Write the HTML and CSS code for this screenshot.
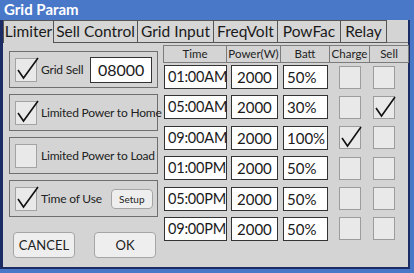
FILE: index.html
```html
<!DOCTYPE html>
<html lang="en">

<head>
  <meta charset="UTF-8">
  <title>Grid Param</title>
  <link rel="stylesheet" href="styles.css">
</head>

<body>
  <div class="screen">
    <div class="title">Grid Param</div>

    <div class="panel">
      <div class="tabs">
        <div class="tab active w-limiter">Limiter</div>
        <div class="tab w-sell">Sell Control</div>
        <div class="tab w-grid">Grid Input</div>
        <div class="tab w-freq">FreqVolt</div>
        <div class="tab w-pow">PowFac</div>
        <div class="tab w-relay">Relay</div>
        <div class="tab-fill"></div>
      </div>

      <div class="content">
        <div class="left">
          <div class="group">
            <div class="check on">
              <svg viewBox="0 0 22 24"><path d="M2 13 L7.5 21 L22 1"/></svg>
            </div>
            <span class="label">Grid Sell</span>
            <div class="field grid-sell">08000</div>
          </div>
          <div class="group">
            <div class="check on">
              <svg viewBox="0 0 22 24"><path d="M2 13 L7.5 21 L22 1"/></svg>
            </div>
            <span class="label">Limited Power to Home</span>
          </div>
          <div class="group">
            <div class="check"></div>
            <span class="label">Limited Power to Load</span>
          </div>
          <div class="group">
            <div class="check on">
              <svg viewBox="0 0 22 24"><path d="M2 13 L7.5 21 L22 1"/></svg>
            </div>
            <span class="label">Time of Use</span>
            <div class="btn setup">Setup</div>
          </div>
          <div class="actions">
            <div class="btn big">CANCEL</div>
            <div class="btn big">OK</div>
          </div>
        </div>

        <div class="table">
          <div class="th first">Time</div>
          <div class="th">Power(W)</div>
          <div class="th">Batt</div>
          <div class="th">Charge</div>
          <div class="th">Sell</div>
        </div>
        <div class="rows" id="rows"></div>
      </div>
    </div>
  </div>

  <script>
    // schedule rows for time of use
    const rows = [
      { time: '01:00AM', power: 2000, batt: '50%', charge: false, sell: false },
      { time: '05:00AM', power: 2000, batt: '30%', charge: false, sell: true },
      { time: '09:00AM', power: 2000, batt: '100%', charge: true, sell: false },
      { time: '01:00PM', power: 2000, batt: '50%', charge: false, sell: false },
      { time: '05:00PM', power: 2000, batt: '50%', charge: false, sell: false },
      { time: '09:00PM', power: 2000, batt: '50%', charge: false, sell: false }
    ];

    const tick = '<svg viewBox="0 0 22 24"><path d="M2 13 L7.5 21 L21 2"/></svg>';
    const box = document.getElementById('rows');

    rows.forEach(r => {
      const row = document.createElement('div');
      row.classList.add('row');
      row.innerHTML = `
        <div class="field c-time">${r.time}</div>
        <div class="field c-power">${r.power}</div>
        <div class="field c-batt">${r.batt}</div>
        <div class="check small c-charge">${r.charge ? tick : ''}</div>
        <div class="check small c-sell">${r.sell ? tick : ''}</div>
      `;
      box.appendChild(row);
    });
  </script>
</body>

</html>
```

FILE: styles.css
```css
* {
  margin: 0;
  padding: 0;
  box-sizing: border-box;
}

body {
  font-family: Lato, "Liberation Sans", sans-serif;
  color: #1a1a1a;
  background: #4a78c9;
}

.screen {
  width: 414px;
  height: 273px;
  background: #4a78c9;
  overflow: hidden;
}

.title {
  height: 20px;
  padding-left: 4px;
  color: #fff;
  font-weight: bold;
  font-size: 15px;
  line-height: 19px;
}

.panel {
  width: 410px;
  height: 249px;
  background: #d4d4d4;
  border-left: 3px solid #1b2b63;
  border-right: 2px solid #1b2b63;
  border-bottom: 2px solid #1b2b63;
  position: relative;
}

/* tabs */
.tabs {
  display: flex;
  height: 23px;
}

.tab {
  height: 23px;
  border-top: 1px solid #555;
  border-right: 1px solid #555;
  border-bottom: 1px solid #555;
  font-size: 15.5px;
  line-height: 21px;
  text-align: center;
  white-space: nowrap;
  background: #d6d6d6;
}

.tab.active {
  border-left: 1px solid #555;
  border-bottom: none;
  background: #d4d4d4;
}

.tab-fill {
  flex: 1;
  border-bottom: 1px solid #777;
}

.w-limiter { width: 51px; }
.w-sell { width: 84px; }
.w-grid { width: 76px; }
.w-freq { width: 64px; }
.w-pow { width: 63px; }
.w-relay { width: 46px; }

/* body */
.content {
  position: relative;
  height: 224px;
  display: flex;
}

.left {
  width: 149px;
  margin-left: 6px;
  padding-top: 8px;
  display: flex;
  flex-direction: column;
  gap: 6px;
}

.group {
  height: 37px;
  border: 1px solid #6e6e6e;
  display: flex;
  align-items: center;
  padding-left: 5px;
}

.check {
  width: 22px;
  height: 24px;
  background: #e9e9e9;
  border: 1px solid #a3a3a3;
  position: relative;
  flex-shrink: 0;
}

.check svg {
  position: absolute;
  left: 0;
  top: -2px;
  width: 22px;
  height: 24px;
  overflow: visible;
}

.check svg path {
  fill: none;
  stroke: #111;
  stroke-width: 1.6;
}

.label {
  margin-left: 4px;
  font-size: 12px;
  letter-spacing: -0.2px;
  white-space: nowrap;
  color: #222;
}

.field {
  background: #fff;
  border: 1px solid #333;
  font-size: 15px;
  line-height: 22px;
  height: 24px;
  padding-left: 3px;
  white-space: nowrap;
}

.grid-sell {
  width: 62px;
  height: 26px;
  line-height: 24px;
  margin-left: auto;
  margin-right: 5px;
  font-size: 16px;
  padding-left: 7px;
}

.btn {
  background: #eeeeee;
  border: 1px solid #a5a5a5;
  border-radius: 4px;
  text-align: center;
  color: #222;
}

.setup {
  width: 42px;
  height: 20px;
  margin-left: 9px;
  font-size: 10px;
  line-height: 18px;
}

.actions {
  display: flex;
  gap: 19px;
  margin-top: 9px;
  padding-left: 4px;
}

.big {
  width: 62px;
  height: 26px;
  font-size: 13px;
  line-height: 24px;
}

/* schedule table */
.table {
  position: absolute;
  left: 160px;
  top: 2px;
  display: grid;
  grid-template-columns: 64px 54px 49px 40px 39px;
  height: 18px;
}

.th {
  border-top: 1px solid #7c7c7c;
  border-right: 1px solid #7c7c7c;
  border-bottom: 1px solid #7c7c7c;
  font-size: 11.5px;
  line-height: 16px;
  text-align: center;
  white-space: nowrap;
  color: #222;
}

.th.first {
  border-left: 1px solid #7c7c7c;
}

.rows {
  position: absolute;
  left: 161px;
  top: 22px;
  display: flex;
  flex-direction: column;
  gap: 6.4px;
}

.row {
  display: flex;
  align-items: center;
  height: 24px;
}

.c-time {
  width: 63px;
  padding-left: 3px;
  font-size: 14.5px;
  letter-spacing: -0.2px;
}

.c-power {
  width: 47px;
  margin-left: 4px;
  padding-left: 5px;
}

.c-batt {
  width: 45px;
  margin-left: 5px;
}

.check.small {
  width: 22px;
  height: 23px;
  border-color: #9c9c9c;
}

.c-charge {
  margin-left: 11px;
}

.c-sell {
  margin-left: 12px;
}
```
